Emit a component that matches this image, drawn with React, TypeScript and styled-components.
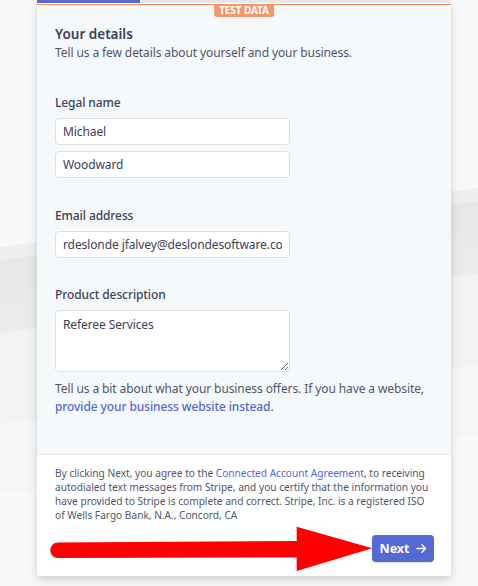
import React from "react";
import styled, { createGlobalStyle } from "styled-components";

const FONT = `"Noto Sans", "Open Sans", sans-serif`;

const Global = createGlobalStyle`
  html, body { margin: 0; padding: 0; }
  body {
    font-family: ${FONT};
    background-color: #f7f8fa;
    background-image: linear-gradient(
      173deg,
      #f8f9fa 0px,
      #f8f9fa 245px,
      #efefef 245px,
      #efefef 258px,
      #e7e7e7 258px,
      #ececec 330px,
      #f2f2f2 330px,
      #f2f2f2 420px,
      #f6f6f7 420px,
      #f6f6f7 490px,
      #f8f9fa 490px
    );
    min-height: 586px;
    overflow: hidden;
  }
  * { box-sizing: border-box; }
`;

const Page = styled.div`
  width: 478px;
  height: 586px;
  padding-left: 37px;
`;

const Card = styled.div`
  width: 414px;
  background: #ffffff;
  border-radius: 0 0 4px 4px;
  box-shadow: 0 7px 14px 0 rgba(60, 66, 87, 0.09), 0 3px 6px 0 rgba(0, 0, 0, 0.1);
  overflow: hidden;
`;

const Progress = styled.div`
  display: flex;
  height: 3px;
  background: #e3e8ee;
`;

const ProgressFill = styled.div`
  height: 100%;
  background: #5469d4;
`;

const Body = styled.div`
  position: relative;
  margin-top: 1px;
  border-top: 1px solid #f5894f;
  background: #f6f9fc;
  padding: 19px 18px 38px 18px;
  display: flex;
  flex-direction: column;
`;

const Badge = styled.div`
  position: absolute;
  top: -1px;
  left: 50%;
  transform: translateX(-50%);
  height: 12.5px;
  padding: 0 5px;
  background: #f7966a;
  color: #ffffff;
  font-family: ${FONT};
  font-size: 10px;
  font-weight: 700;
  line-height: 12.5px;
  letter-spacing: -0.1px;
  border-radius: 0 0 3px 3px;
  white-space: nowrap;
`;

const Title = styled.h2`
  margin: 0;
  font-size: 13.5px;
  font-weight: 600;
  line-height: 20px;
  color: #3c4257;
`;

const Lead = styled.p`
  margin: 0;
  font-size: 12px;
  letter-spacing: -0.1px;
  line-height: 18px;
  color: #4f566b;
`;

const Section = styled.div<{ $top: number }>`
  margin-top: ${(p) => p.$top}px;
  display: flex;
  flex-direction: column;
  gap: 6px;
`;

const Label = styled.label`
  font-size: 12px;
  letter-spacing: -0.1px;
  font-weight: 500;
  line-height: 18px;
  color: #3c4257;
`;

const Input = styled.input`
  width: 235px;
  height: 27px;
  border: 1px solid #dcdfe6;
  border-radius: 4px;
  background: #ffffff;
  padding: 0 7px;
  font-family: ${FONT};
  font-size: 12px;
  letter-spacing: -0.1px;
  color: #3c4257;
  outline: none;
`;

const TextArea = styled.textarea`
  width: 235px;
  height: 62px;
  border: 1px solid #dcdfe6;
  border-radius: 4px;
  background: #ffffff;
  padding: 5px 7px;
  font-family: ${FONT};
  font-size: 12px;
  letter-spacing: -0.1px;
  line-height: 18px;
  color: #3c4257;
  outline: none;
`;

const Help = styled.p`
  margin: 8px 0 0 0;
  font-size: 12px;
  letter-spacing: -0.1px;
  line-height: 18px;
  color: #4f566b;
`;

const Link = styled.a<{ $strong?: boolean }>`
  color: #5469d4;
  font-weight: ${(p) => (p.$strong ? 500 : 400)};
  text-decoration: none;
`;

const Footer = styled.div`
  position: relative;
  border-top: 1px solid #e3e8ee;
  background: #ffffff;
  padding: 11px 14px 14px 18px;
  display: flex;
  flex-direction: column;
`;

const Legal = styled.p`
  margin: 0;
  font-size: 10.15px;
  letter-spacing: 0px;
  line-height: 14px;
  color: #4f566b;
`;

const Actions = styled.div`
  margin-top: 13px;
  display: flex;
  justify-content: flex-end;
  padding-right: 3px;
`;

const NextButton = styled.button`
  height: 27px;
  width: 62px;
  border: none;
  border-radius: 4px;
  background: #5469d4;
  color: #ffffff;
  font-family: ${FONT};
  font-size: 12.5px;
  font-weight: 700;
  display: flex;
  align-items: center;
  justify-content: center;
  gap: 6px;
  padding: 0;
  box-shadow: 0 1px 1px rgba(0, 0, 0, 0.12);
`;

const Annotation = styled.svg`
  position: absolute;
  left: 0;
  top: 0;
  width: 414px;
  height: 121px;
  pointer-events: none;
`;

export default function App() {
  return (
    <>
      <Global />
      <Page>
        <Card>
          <Progress>
            <ProgressFill style={{ width: 103 }} />
          </Progress>
          <Body>
            <Badge>TEST DATA</Badge>
            <Title>Your details</Title>
            <Lead>Tell us a few details about yourself and your business.</Lead>

            <Section $top={32}>
              <Label>Legal name</Label>
              <Input defaultValue="Michael" />
              <Input defaultValue="Woodward" />
            </Section>

            <Section $top={29}>
              <Label>Email address</Label>
              <Input defaultValue="rdeslonde jfalvey@deslondesoftware.com" />
            </Section>

            <Section $top={28}>
              <Label>Product description</Label>
              <TextArea defaultValue="Referee Services" />
            </Section>
            <Help>
              Tell us a bit about what your business offers. If you have a website,{" "}
              <Link $strong>provide your business website instead</Link>.
            </Help>
          </Body>
          <Footer>
            <Legal>
              By clicking Next, you agree to the <Link>Connected Account Agreement</Link>, to
              receiving
              <br />
              autodialed text messages from Stripe, and you certify that the information you
              <br />
              have provided to Stripe is complete and correct. Stripe, Inc. is a registered ISO
              <br />
              of Wells Fargo Bank, N.A., Concord, CA
            </Legal>
            <Actions>
              <NextButton>
                Next
                <svg width="11" height="11" viewBox="0 0 12 12" fill="none">
                  <path
                    d="M1 6h9.5M6.5 2l4 4-4 4"
                    stroke="#ffffff"
                    strokeWidth="1.5"
                    strokeLinecap="round"
                    strokeLinejoin="round"
                  />
                </svg>
              </NextButton>
            </Actions>
            <Annotation viewBox="0 0 414 121">
              <path
                d="M21 87.5 L261 86 L261 102.5 L21 103 A7.75 7.75 0 0 1 21 87.5 Z"
                fill="#ff0000"
              />
              <polygon points="259.7,71.7 335.3,93.3 259.7,116" fill="#ff0000" />
            </Annotation>
          </Footer>
        </Card>
      </Page>
    </>
  );
}
